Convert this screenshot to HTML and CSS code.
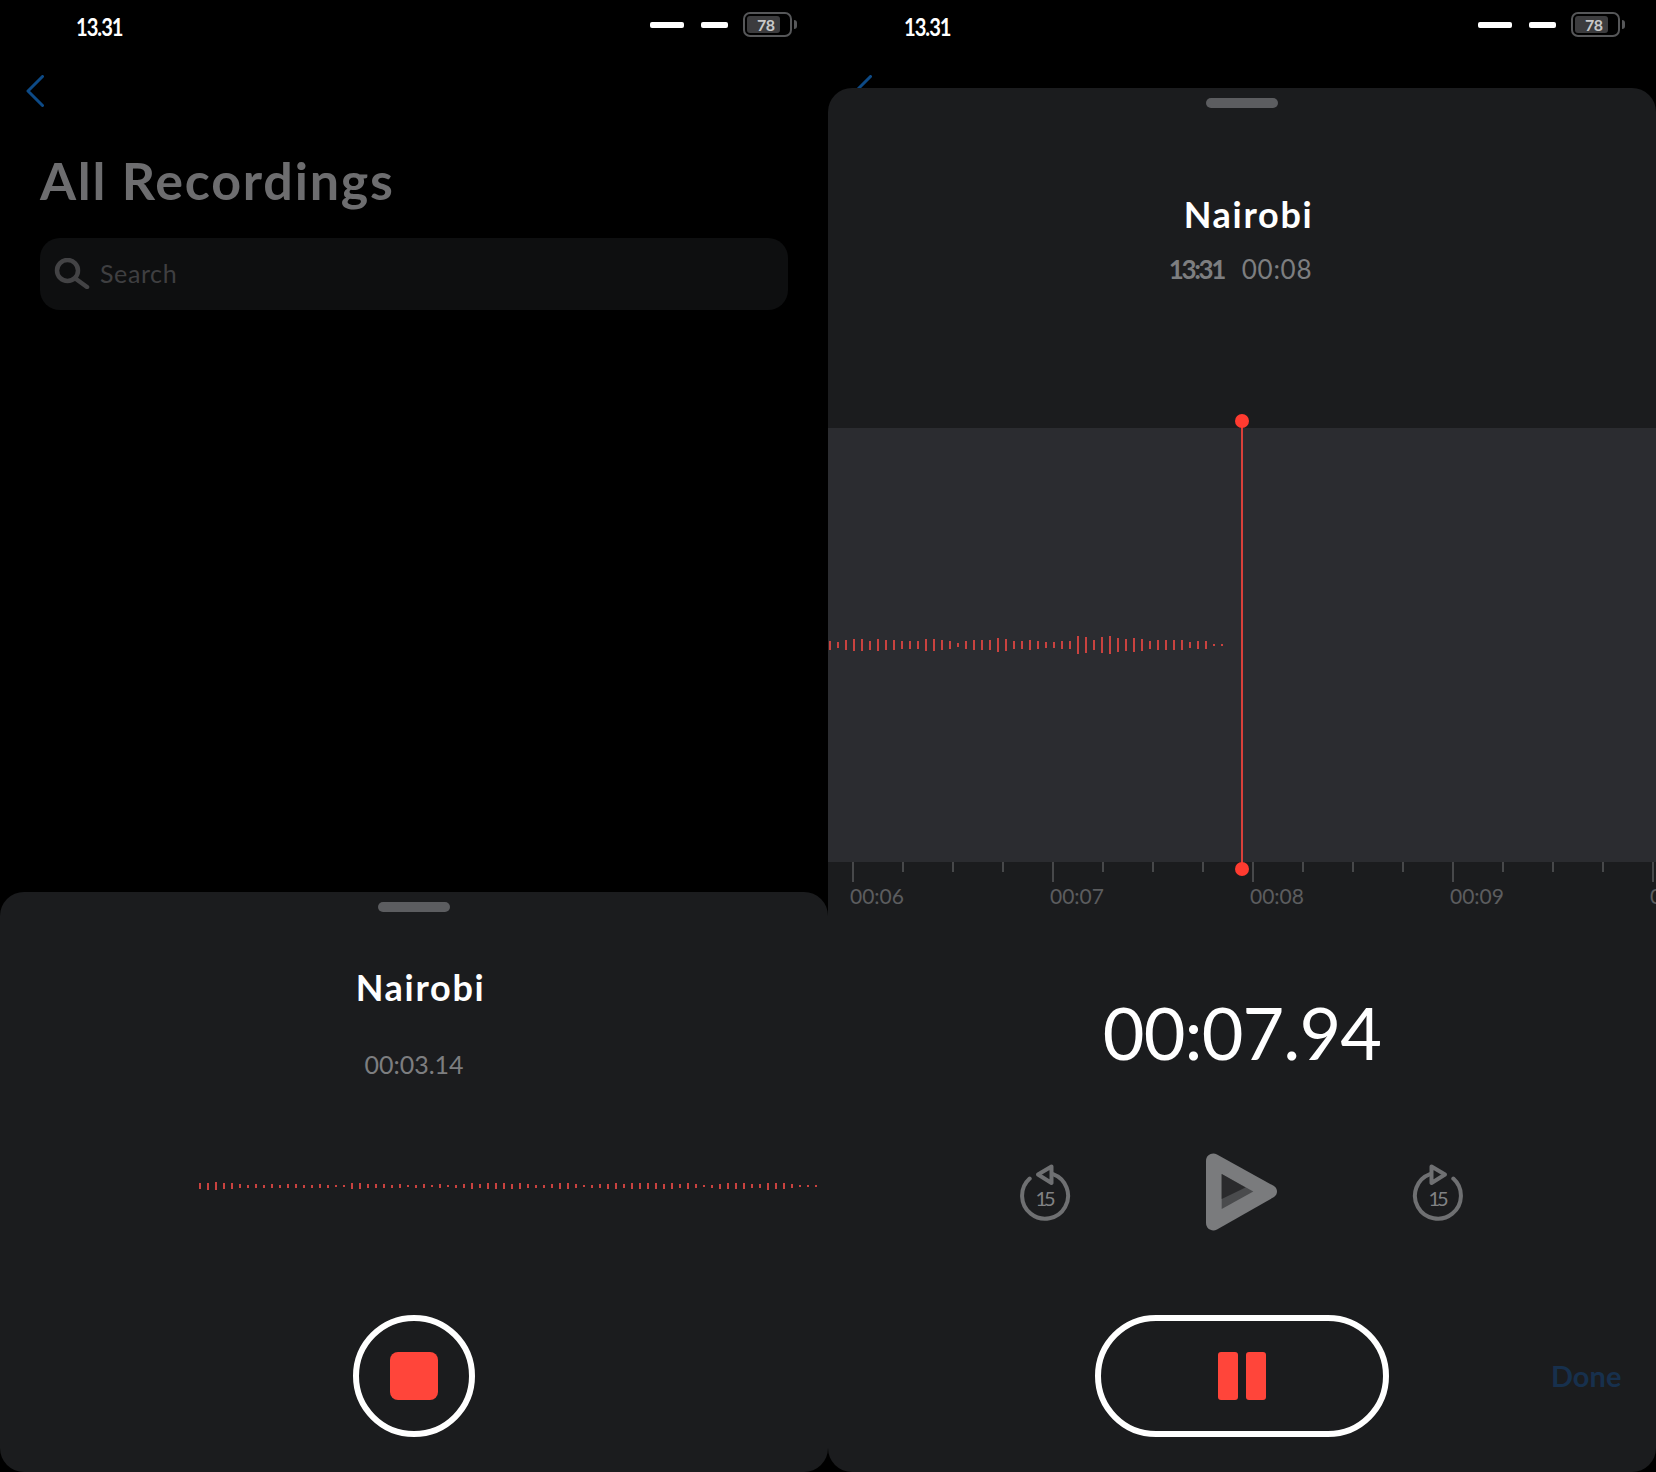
FILE: index.html
```html
<!DOCTYPE html>
<html lang="en">
<head>
<meta charset="utf-8">
<title>Voice Recorder</title>
<link rel="stylesheet" href="styles.css">
</head>
<body>
<main class="screens">
  <section class="phone">
    <header class="status">
      <span class="clock">13.31</span>
      <div class="indicators">
        <i class="sig sig-long"></i><i class="sig sig-short"></i>
        <div class="battery"><span class="battery-fill">78</span></div><i class="nub"></i>
      </div>
    </header>
    <nav class="nav">
      <svg class="chev" viewBox="0 0 18 32"><path d="M16.5 1.5 2 16l14.5 14.5"/></svg>
    </nav>
    <h1 class="title">All Recordings</h1>
    <div class="search">
      <svg class="search-icon" viewBox="0 0 37 31"><circle cx="14.5" cy="12.5" r="10.5"/><path class="handle-line" d="M23 21l11 8"/></svg>
      <span>Search</span>
    </div>
    <div class="sheet sheet-rec">
      <div class="grip"></div>
      <h2 class="name name-rec">Nairobi</h2>
      <div class="elapsed">00:03.14</div>
      <div class="wave wave-rec">
        <i class="b6"></i><i class="b7"></i><i class="b8"></i><i class="b6"></i><i class="b6"></i><i class="b4"></i><i class="b3"></i><i class="b4"></i><i class="b3"></i><i class="b4"></i><i class="b3"></i><i class="b4"></i><i class="b4"></i><i class="b3"></i><i class="b3"></i><i class="b4"></i><i class="b3"></i><i class="b2"></i><i class="b2"></i><i class="b6"></i><i class="b6"></i><i class="b4"></i><i class="b4"></i><i class="b4"></i><i class="b3"></i><i class="b4"></i><i class="b2"></i><i class="b3"></i><i class="b4"></i><i class="b2"></i><i class="b4"></i><i class="b2"></i><i class="b3"></i><i class="b4"></i><i class="b6"></i><i class="b4"></i><i class="b6"></i><i class="b6"></i><i class="b6"></i><i class="b5"></i><i class="b6"></i><i class="b4"></i><i class="b3"></i><i class="b3"></i><i class="b4"></i><i class="b6"></i><i class="b6"></i><i class="b4"></i><i class="b2"></i><i class="b3"></i><i class="b4"></i><i class="b5"></i><i class="b6"></i><i class="b4"></i><i class="b6"></i><i class="b6"></i><i class="b6"></i><i class="b6"></i><i class="b5"></i><i class="b6"></i><i class="b4"></i><i class="b6"></i><i class="b4"></i><i class="b2"></i><i class="b3"></i><i class="b5"></i><i class="b6"></i><i class="b6"></i><i class="b6"></i><i class="b4"></i><i class="b4"></i><i class="b7"></i><i class="b6"></i><i class="b6"></i><i class="b4"></i><i class="b2"></i><i class="b2"></i><i class="b2"></i>
      </div>
      <div class="action-row action-rec">
        <button class="record-btn record-round" aria-label="Stop"><i class="stop"></i></button>
      </div>
    </div>
  </section>

  <section class="phone">
    <header class="status">
      <span class="clock">13.31</span>
      <div class="indicators">
        <i class="sig sig-long"></i><i class="sig sig-short"></i>
        <div class="battery"><span class="battery-fill">78</span></div><i class="nub"></i>
      </div>
    </header>
    <nav class="nav">
      <svg class="chev" viewBox="0 0 18 32"><path d="M16.5 1.5 2 16l14.5 14.5"/></svg>
    </nav>
    <div class="sheet sheet-full">
      <div class="grip"></div>
      <h2 class="name name-full">Nairobi</h2>
      <div class="meta"><b>13:31</b><span>00:08</span></div>
      <div class="plot">
        <div class="wave wave-full">
          <i class="b9"></i><i class="b6"></i><i class="b10"></i><i class="b12"></i><i class="b12"></i><i class="b9"></i><i class="b12"></i><i class="b10"></i><i class="b10"></i><i class="b8"></i><i class="b8"></i><i class="b8"></i><i class="b12"></i><i class="b12"></i><i class="b10"></i><i class="b8"></i><i class="b4"></i><i class="b8"></i><i class="b10"></i><i class="b10"></i><i class="b10"></i><i class="b14"></i><i class="b12"></i><i class="b8"></i><i class="b8"></i><i class="b10"></i><i class="b8"></i><i class="b6"></i><i class="b6"></i><i class="b8"></i><i class="b8"></i><i class="b18"></i><i class="b16"></i><i class="b10"></i><i class="b16"></i><i class="b18"></i><i class="b14"></i><i class="b12"></i><i class="b14"></i><i class="b12"></i><i class="b8"></i><i class="b10"></i><i class="b10"></i><i class="b10"></i><i class="b10"></i><i class="b6"></i><i class="b8"></i><i class="b8"></i><i class="b2"></i><i class="b2"></i>
        </div>
        <div class="playhead"><i class="dot dot-top"></i><i class="dot dot-bottom"></i></div>
      </div>
      <div class="ruler">
        <div class="ticks">
          <i class="major"></i><i></i><i></i><i></i><i class="major"></i><i></i><i></i><i></i><i class="major"></i><i></i><i></i><i></i><i class="major"></i><i></i><i></i><i></i><i class="major"></i>
        </div>
        <div class="labels"><span>00:06</span><span>00:07</span><span>00:08</span><span>00:09</span><span>00:10</span></div>
      </div>
      <div class="timer">00:07.94</div>
      <div class="transport">
        <svg class="skip" viewBox="0 0 54 60"><path class="ring" d="M11.7 16.6A23 23 0 1 0 35 12.1"/><path class="arrow" d="M33.5 4.5 20 12.5 33.5 21z"/><text x="26" y="44" class="skip-num">15</text></svg>
        <svg class="play" viewBox="0 0 71 78"><path class="play-body" d="M0 8C0 2 6-1 11 1.5L68 33C72 36 72 41 68 44L11 76.5C6 79 0 76 0 70Z"/><path class="play-hole" d="M15.7 21V56L47.3 38.5Z"/><path class="play-shade" d="M15.7 21V46L39.5 34.5Z"/></svg>
        <svg class="skip" viewBox="0 0 54 60"><path class="ring" d="M42.3 16.6A23 23 0 1 1 19 12.1"/><path class="arrow" d="M20.5 4.5 34 12.5 20.5 21z"/><text x="26" y="44" class="skip-num">15</text></svg>
      </div>
      <div class="action-row action-full">
        <button class="record-btn record-pill" aria-label="Pause"><i class="pause"></i><i class="pause"></i></button>
        <span class="done">Done</span>
      </div>
    </div>
  </section>
</main>
</body>
</html>
```
FILE: styles.css
```css
* { box-sizing: border-box; }
html, body { margin: 0; padding: 0; background: #000; }
body { font-family: "Lato", "Liberation Sans", sans-serif; }
.screens { display: flex; width: 1656px; height: 1472px; overflow: hidden; }
.phone { position: relative; width: 828px; height: 1472px; overflow: hidden; background: #000; }

.status { display: flex; justify-content: space-between; height: 60px; padding: 12px 31px 0 76px; }
.clock { font-size: 24px; line-height: 30px; font-weight: 700; color: #fff; letter-spacing: -1.2px; transform: scaleX(.84); transform-origin: left center; }
.indicators { display: flex; align-items: flex-start; }
.sig { display: block; height: 6px; margin-top: 10px; background: #fff; border-radius: 2px; }
.sig-long { width: 34px; margin-right: 17px; }
.sig-short { width: 27px; margin-right: 15px; }
.battery { width: 49px; height: 25px; padding: 2px; border: 2px solid #565759; border-radius: 7px; }
.battery-fill { display: block; width: 33px; height: 17px; padding-left: 10px; background: #3c3c3e; border-radius: 3px; color: #c9c9c9; font-size: 16px; line-height: 17px; font-weight: 700; letter-spacing: -.5px; }
.nub { display: block; width: 3px; height: 9px; margin: 8px 0 0 2px; background: #565759; border-radius: 0 3px 3px 0; }

.nav { height: 60px; padding: 15px 0 0 26px; }
.chev { display: block; width: 18px; height: 32px; }
.chev path { fill: none; stroke: #0d4a86; stroke-width: 3; stroke-linecap: round; stroke-linejoin: round; }

.title { margin: 28px 0 0 40px; font-size: 52px; line-height: 64px; font-weight: 700; color: #6d6d6f; letter-spacing: 1.8px; }
.search { display: flex; align-items: center; gap: 10px; width: 748px; height: 72px; margin: 26px 0 0 40px; padding: 0 0 2px 13px; background: #0e0f10; border-radius: 20px; color: #3f3f41; font-size: 25px; font-weight: 400; letter-spacing: .6px; }
.search-icon { width: 37px; height: 31px; flex: none; }
.search-icon circle, .search-icon .handle-line { fill: none; stroke: #434345; stroke-width: 4.5; stroke-linecap: round; }

.sheet { position: absolute; left: 0; right: 0; bottom: 0; background: #1b1c1e; border-radius: 24px; }
.sheet-rec { top: 892px; }
.sheet-full { top: 88px; }
.grip { width: 72px; height: 10px; margin: 10px auto 0; background: #5c5d60; border-radius: 5px; }

.name { margin: 0; text-align: center; font-size: 36px; font-weight: 700; line-height: 44px; color: #fff; letter-spacing: 1.7px; }
.name-rec { margin-top: 53px; padding-left: 13px; }
.name-full { margin-top: 84px; padding-left: 13px; }
.elapsed { margin-top: 38px; text-align: center; color: #7d7e80; font-size: 25px; line-height: 34px; font-weight: 400; }
.meta { display: flex; justify-content: center; gap: 18px; margin-top: 16px; padding-right: 3px; color: #7d7e80; font-size: 26px; line-height: 34px; }
.meta b { font-weight: 700; letter-spacing: -2.4px; }
.meta span { letter-spacing: .7px; }

.wave { display: flex; align-items: center; gap: 6px; }
.wave i { display: block; width: 2px; flex: none; background: #c9423f; }
.b2 { height: 2px; } .b3 { height: 3px; } .b4 { height: 4px; } .b5 { height: 5px; } .b6 { height: 6px; } .b7 { height: 7px; } .b8 { height: 8px; } .b9 { height: 9px; } .b10 { height: 10px; } .b12 { height: 12px; } .b14 { height: 14px; } .b16 { height: 16px; } .b18 { height: 18px; }
.wave-rec { height: 12px; margin: 99px 0 0 199px; }

.action-row { display: flex; justify-content: center; position: relative; }
.action-rec { margin-top: 123px; }
.record-btn { display: flex; align-items: center; justify-content: center; height: 122px; padding: 0; background: transparent; border: 6px solid #fff; }
.record-round { width: 122px; border-radius: 50%; }
.record-pill { width: 294px; border-radius: 61px; gap: 8px; }
.stop { display: block; width: 48px; height: 48px; background: #ff453a; border-radius: 8px; }
.pause { display: block; width: 20px; height: 48px; background: #ff453a; border-radius: 3px; }
.done { position: absolute; left: 723px; top: 43px; color: #17304d; font-size: 29px; line-height: 36px; font-weight: 700; }

.plot { position: relative; height: 434px; margin-top: 142px; background: #2b2c30; }
.wave-full { position: absolute; left: 0; top: 207px; height: 20px; padding-left: 1px; }
.playhead { position: absolute; left: 413px; top: -7px; width: 2px; height: 448px; background: #d9403a; }
.dot { position: absolute; left: -6px; width: 14px; height: 14px; background: #ff3b30; border-radius: 50%; }
.dot-top { top: -7px; }
.dot-bottom { bottom: -7px; }

.ruler { height: 50px; overflow: hidden; }
.ticks { display: flex; align-items: flex-start; gap: 48px; height: 20px; padding-left: 24px; }
.ticks i { display: block; width: 2px; height: 10px; flex: none; background: #47484a; }
.ticks i.major { height: 20px; }
.labels { display: flex; padding: 1px 0 0 22px; }
.labels span { flex: none; width: 200px; color: #5c5d5f; font-size: 21px; line-height: 26px; }

.timer { margin-top: 72px; text-align: center; color: #fff; font-size: 72px; line-height: 96px; font-weight: 400; letter-spacing: -.9px; }

.transport { display: flex; align-items: center; justify-content: space-between; width: 447px; height: 78px; margin: 73px 0 0 190px; }
.skip { width: 54px; height: 60px; flex: none; }
.ring { fill: none; stroke: #6f7072; stroke-width: 4; stroke-linecap: round; }
.arrow { fill: #1b1c1e; stroke: #6f7072; stroke-width: 4; stroke-linejoin: round; }
.skip-num { fill: #818284; font-family: "Lato", sans-serif; font-size: 20px; letter-spacing: -3px; text-anchor: middle; }
.play { width: 71px; height: 78px; flex: none; }
.play-body { fill: #7a7b7d; }
.play-hole { fill: #4a4b4d; }
.play-shade { fill: #2a2a2c; }

.action-full { margin-top: 84px; }
```
